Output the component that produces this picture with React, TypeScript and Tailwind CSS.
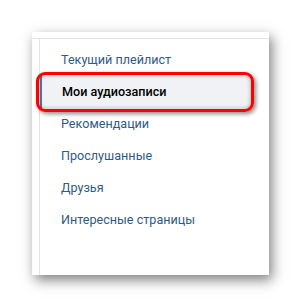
import React from "react";

const items = [
  "Текущий плейлист",
  "Мои аудиозаписи",
  "Рекомендации",
  "Прослушанные",
  "Друзья",
  "Интересные страницы",
];

export default function App() {
  return (
    <div
      className="relative w-[301px] h-[307px] bg-white overflow-hidden pl-[32px] pt-[32px]"
      style={{ fontFamily: "Roboto, 'Open Sans', sans-serif" }}
    >
      <div className="relative w-[237px] h-[243px] bg-white pt-[6px] shadow-[3px_5px_12px_rgba(0,0,0,0.5)]">
        <div className="h-full border-t border-[#e3e4e8]">
          <div className="ml-[7px] h-full border-l border-[#e3e4e8] pt-[5px]">
            {items.map((t, i) =>
              i === 1 ? (
                <div
                  key={t}
                  className="h-[32px] mr-[18px] flex items-center pl-[20px] bg-[#f0f2f5] border-l-2 border-[#5b7aa3] text-[12.6px] font-medium text-[#000]"
                >
                  {t}
                </div>
              ) : (
                <div
                  key={t}
                  className="h-[32px] flex items-center pl-[21px] text-[12.6px] text-[#2f5b87]"
                >
                  {t}
                </div>
              )
            )}
          </div>
        </div>
        <div className="absolute left-[4px] top-[40px] w-[218px] h-[40px] rounded-[9px] border-[3px] border-[#ff0000] shadow-[2px_2px_4px_rgba(0,0,0,0.45),inset_0_0_4px_rgba(0,0,0,0.35)]" />
      </div>
    </div>
  );
}
